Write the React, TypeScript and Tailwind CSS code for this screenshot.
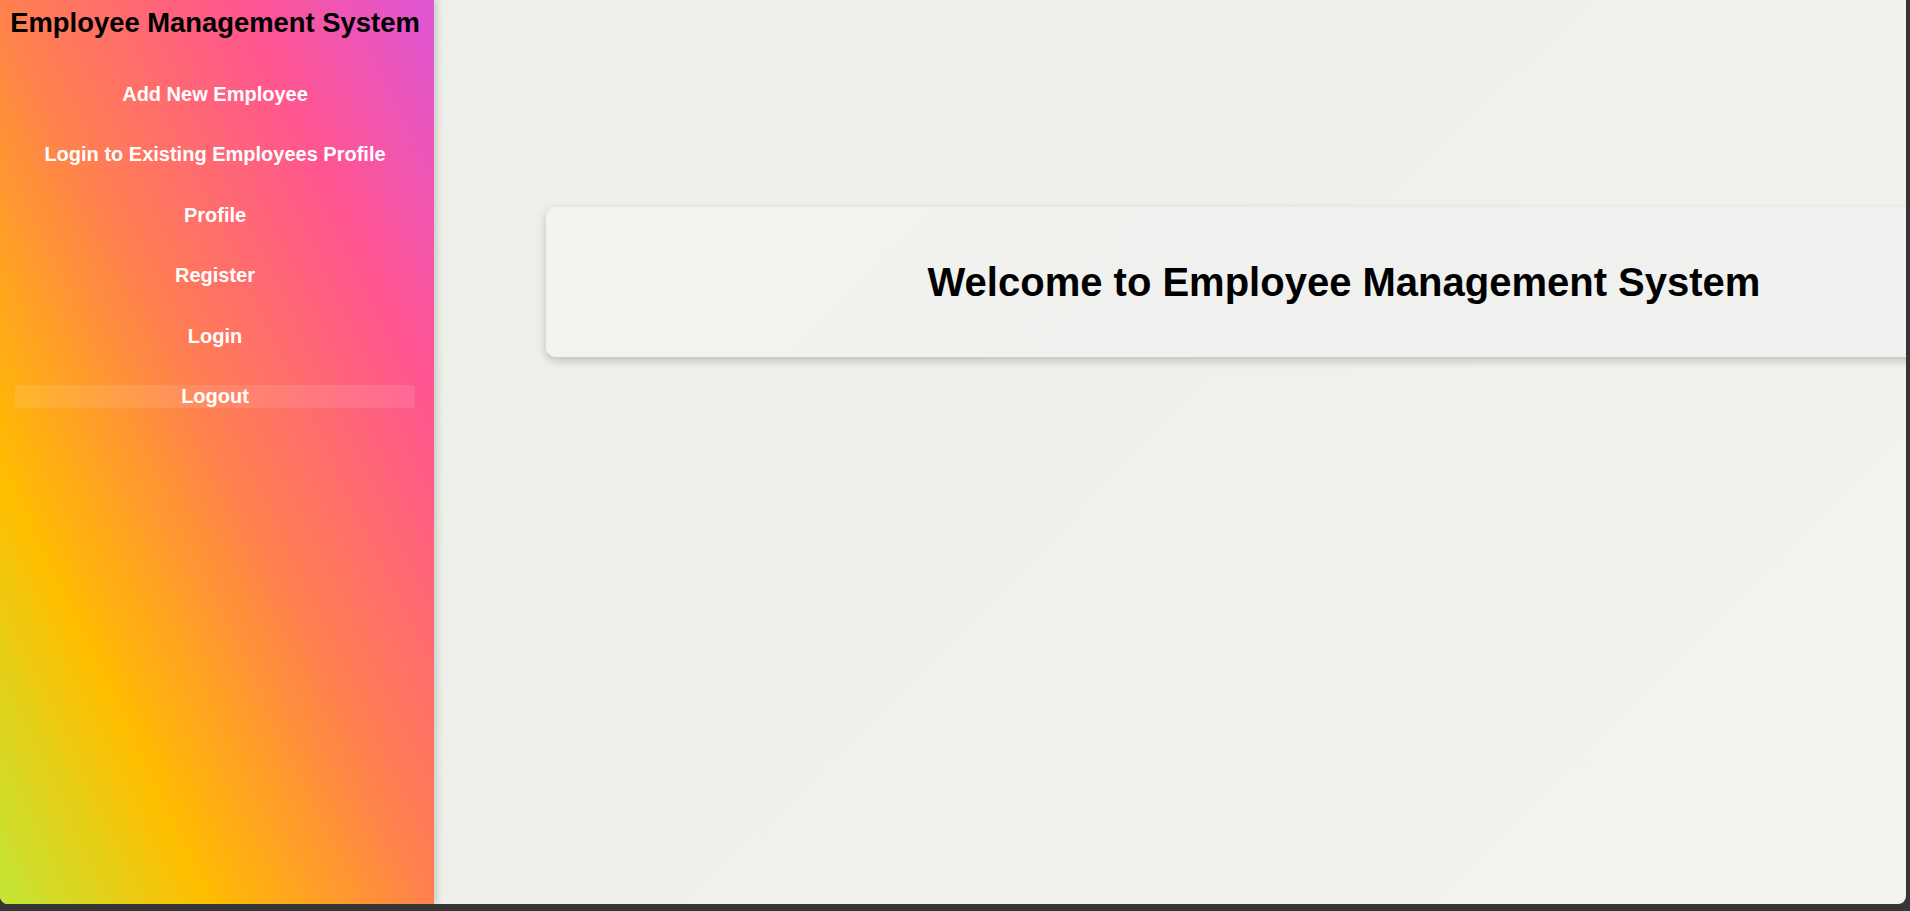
const navItems = [
  'Add New Employee',
  'Login to Existing Employees Profile',
  'Profile',
  'Register',
  'Login',
  'Logout',
];

export default function App() {
  // last item is the active one
  const active = 'Logout';

  return (
    <div className="h-[911px] w-[1910px] overflow-hidden bg-[#363636] font-['Liberation_Sans',Arial,sans-serif]">
      <div className="flex h-[904px] w-[1906px] overflow-hidden rounded-b-[8px] bg-[linear-gradient(135deg,#eeeee9_0%,#f0f0eb_50%,#f4f4ee_100%)]">
        <aside className="relative z-10 w-[434px] shrink-0 bg-[linear-gradient(to_top_right,#c2e636_0%,#ffbd00_24%,#ff7f50_51%,#ff5591_78%,#de56d6_100%)] pr-[4px] pt-[7px] shadow-[3px_0_7px_rgba(0,0,0,0.16)]">
          <h2 className="text-center text-[27.4px] leading-[31.5px] font-bold text-black">
            Employee Management System
          </h2>
          <ul className="mt-[44px] flex flex-col gap-[37.6px] px-[15px]">
            {navItems.map((item) => (
              <li
                key={item}
                className={
                  item === active
                    ? 'rounded-[4px] bg-white/10 text-center text-[20px] leading-[23px] font-bold text-white'
                    : 'text-center text-[20px] leading-[23px] font-bold text-white'
                }
              >
                {item}
              </li>
            ))}
          </ul>
        </aside>

        <main className="min-w-0 flex-1 overflow-hidden pl-[112px] pt-[207px]">
          <div className="w-[1596px] rounded-[10px] bg-[linear-gradient(135deg,#f3f3f0_0%,#f0f0ee_50%,#f1f1f1_100%)] py-[52px] text-center shadow-[0_4px_10px_rgba(0,0,0,0.2)]">
            <h1 className="text-[40px] leading-[46px] font-bold text-black">
              Welcome to Employee Management System
            </h1>
          </div>
        </main>
      </div>
    </div>
  );
}
